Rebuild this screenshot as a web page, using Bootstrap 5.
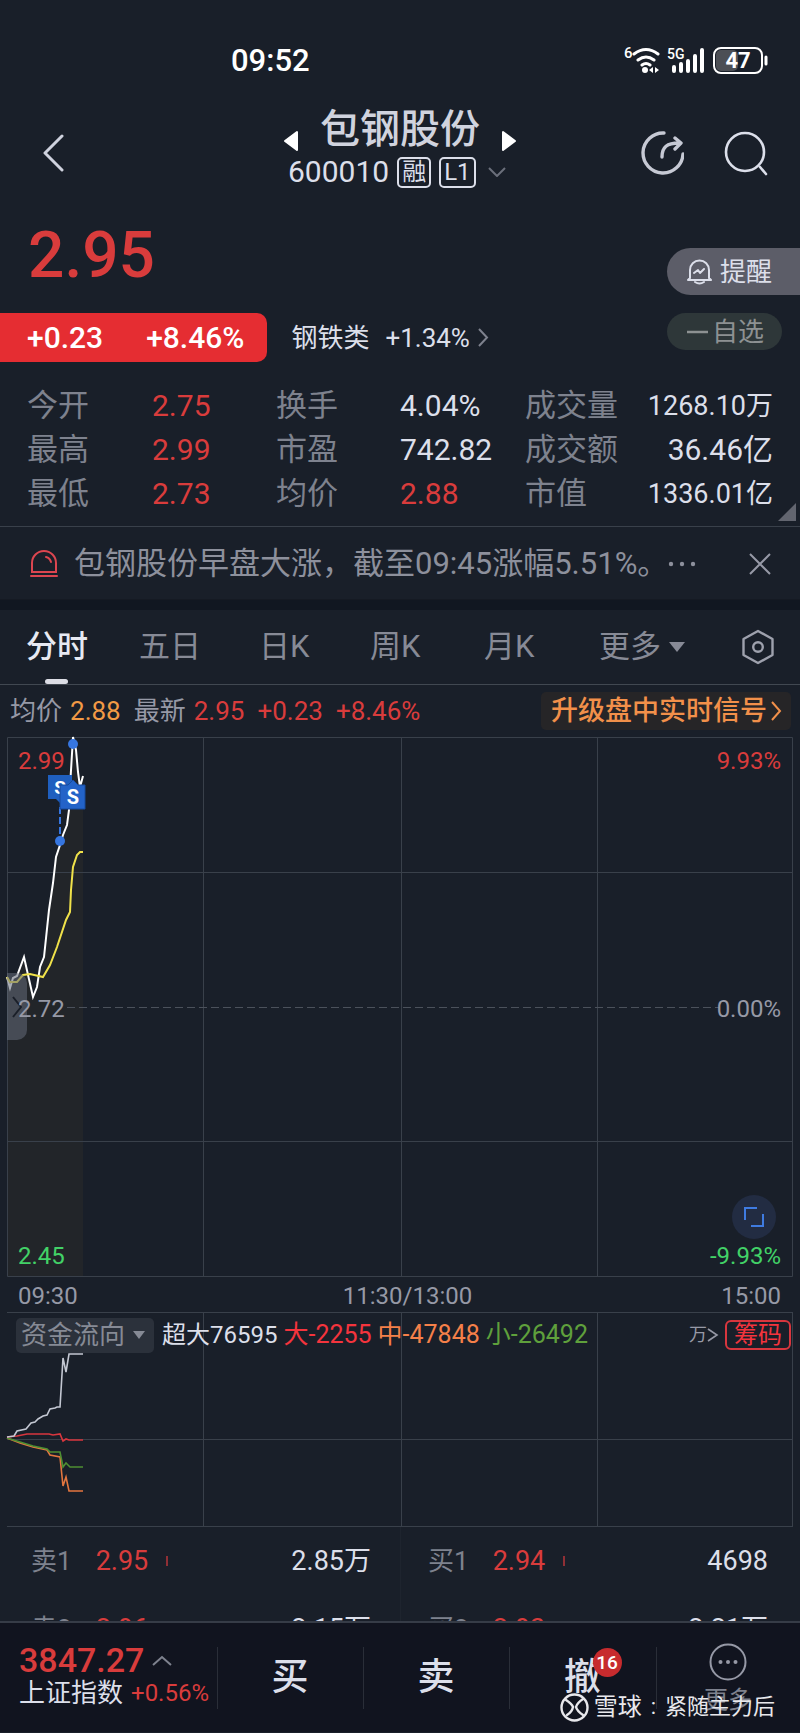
<!DOCTYPE html>
<html lang="zh-CN">
<head>
<meta charset="utf-8">
<meta name="viewport" content="width=device-width, initial-scale=1">
<title>包钢股份 600010</title>
<link href="https://cdn.jsdelivr.net/npm/bootstrap@5.3.0/dist/css/bootstrap.min.css" rel="stylesheet">
<style>
  :root { --ink:#dcdfea; --dim:#7e828e; --mute:#9699a6; --rise:#d93c3c; --fall:#42d267; --line:#39404a; --bg:#191f29; }
  body { background:var(--bg); color:var(--ink); font-family:Roboto,"Noto Sans CJK SC",sans-serif; font-size:26px; line-height:32px; overflow-x:hidden; }
  button { background:none; border:0; padding:0; color:inherit; font:inherit; line-height:inherit; }
  a { color:inherit; text-decoration:none; }
  svg { display:block; flex-shrink:0; }
  .rise { color:var(--rise); } .fall { color:var(--fall); } .dim { color:var(--dim); } .mute { color:var(--mute); }
  .avg { color:#f29a45; }
  .t24 { font-size:24px; } .t26 { font-size:26px; }

  .statusbar { height:85px; padding:37px 30px 0 231px; color:#fff; }
  .clock { font-size:31px; line-height:48px; font-weight:500; }
  .head { height:115px; padding:0 32px; }
  .side { flex:1 1 0; }
  .head .side { padding-top:20px; }
  .back { padding-left:11px; }
  .title-block { min-width:232px; padding-top:23px; }
  .stock-title { font-size:40px; line-height:44px; font-weight:500; color:#d0d3de; }
  .code { font-size:30px; }
  .tagbox { border:2px solid var(--ink); border-radius:5px; height:31px; line-height:27px; font-size:24px; padding:0 3px; }

  .price-row { height:113px; }
  .price { font-size:64px; line-height:72px; font-weight:500; padding:20px 0 0 28px; }
  .remind { background:#5c5d68; height:47px; border-radius:24px 0 0 24px; padding:0 28px 0 20px; margin-top:48px; }
  .delta { background:#e52d32; color:#fff; height:49px; border-radius:0 10px 10px 0; padding:0 23px 0 27px; gap:43px; font-size:30px; font-weight:500; }
  .fav { background:#2e3739; color:#8d9192; height:37px; border-radius:19px; padding:0 18px 0 20px; margin:0 18px 12px 0; }

  .stats { display:grid; grid-template-columns:125fr 124fr 124fr 125fr 122fr 126fr; padding:22px 27px 10px 27px; line-height:44px; font-size:30px; position:relative; }
  .stats dt, .stats dd { margin:0; font-weight:400; white-space:nowrap; }
  .stats dt { color:var(--dim); font-size:31px; }
  .stats .amount { text-align:right; font-size:27px; }
  .stats .amount.wide { font-size:30px; }
  .corner { position:absolute; right:4px; bottom:5px; width:18px; height:18px; background:#62656f; clip-path:polygon(100% 0,100% 100%,0 100%); }

  .news { height:74px; border-top:1px solid var(--line); border-bottom:1px solid #151a23; padding:2px 29px 0 30px; font-size:31px; color:#8d909c; white-space:nowrap; }
  .gapband { height:10px; background:#111721; }
  .tabs { display:grid; grid-template-columns:113fr 120fr 111fr 114fr 115fr 142fr 34px; justify-items:start; align-items:center; height:75px; border-bottom:1px solid #414851; padding:0 25px 0 26px; font-size:31px; color:#878a96; }
  .tabs button { height:74px; position:relative; }
  .tabs .on { color:#e7e9f2; font-weight:500; }
  .tabs .on::after { content:""; position:absolute; left:50%; bottom:0; width:23px; height:5px; margin-left:-12px; border-radius:3px; background:#dcdde5; }
  .tri { display:inline-block; border:8px solid transparent; border-top:10px solid currentColor; border-bottom:0; }
  .tri-sm { border-width:6px; border-top-width:8px; }

  .infobar { height:52px; padding:0 9px 0 10px; }
  .infobar .val { padding-right:13px; }
  .promo { background:#262527; color:#f2904a; border-radius:5px; height:38px; padding:0 9px 0 10px; font-weight:500; }
  .promo span { font-size:27px; }
  .chart { position:relative; margin:0 7px; color:var(--mute); font-size:24px; }
  .chart > svg { width:100%; overflow:visible; }
  .lbl { position:absolute; line-height:32px; }
  .lbl-l { left:11px; } .lbl-r { right:12px; }
  .lbl-top { top:8px; } .lbl-mid { top:256px; } .lbl-bot { bottom:5px; }
  .drawer { position:absolute; left:0; top:236px; width:20px; height:67px; border-radius:0 10px 10px 0; background:rgba(100,107,122,.55); color:#1a1f29; }
  .expand { position:absolute; right:17px; bottom:38px; width:44px; height:44px; border-radius:50%; background:#222c42; color:#3f7be0; }
  .times { height:35px; padding:2px 19px 0 18px; font-size:24px; color:var(--mute); }
  .flowhead { position:absolute; left:9px; right:2px; top:5px; height:36px; gap:6px; }
  .flowpick { background:#2b313b; border-radius:5px; height:35px; padding:0 9px 0 5px; font-size:26px; color:#868a95; margin-right:2px; }
  .flow-xl { color:#dcdfea; } .flow-l { color:#f4343d; } .flow-m { color:#f58049; } .flow-s { color:#5fa03c; }
  .flow-l, .flow-m, .flow-s { font-size:25px; }
  .unit { font-size:18px; }
  .chips { border:2px solid #d8363e; border-radius:6px; color:#f4343d; height:30px; line-height:26px; font-size:24px; padding:0 7px; }

  .book { height:94px; overflow:hidden; font-size:27px; }
  .book .half { width:50%; }
  .book .line { height:68px; }
  .book .who { margin-right:24px; } .book .at { margin-right:18px; }
  .book .half:first-child .line { padding:0 29px 0 31px; }
  .book .half:last-child .line { padding:0 32px 0 27px; }
  .book .half:last-child { border-left:1px solid #1e242e; }
  .bartick { width:2px; height:10px; background:#8f2f35; }

  .dock { border-top:2px solid #363c47; background:#11141f; min-height:111px; position:relative; display:grid; grid-template-columns:217fr 146fr 146fr 147fr 144fr; }
  .dock > a, .dock > button { min-height:109px; position:relative; }
  .dock > button::before { content:""; position:absolute; left:0; top:24px; height:62px; border-left:1px solid #2a2e38; }
  .index-box { padding:16px 0 0 19px; }
  .index-no { font-size:34px; line-height:34px; font-weight:500; }
  .act { font-size:37px; font-weight:500; }
  .cnt { position:absolute; left:50%; top:25px; margin-left:10px; width:29px; height:29px; border-radius:50%; background:#c72b2e; color:#fff; font-size:19px; line-height:29px; font-weight:500; }
  .more { padding-top:20px; gap:3px; }
  .credit { position:absolute; right:25px; bottom:9px; font-size:22px; color:#e8e8ec; gap:5px; }
</style>
</head>
<body>
<main class="container-fluid p-0">
  <header>
    <div class="statusbar d-flex justify-content-between align-items-start">
      <span class="clock">09:52</span>
      <svg class="mt-2" width="146" height="36" viewBox="0 0 146 36" fill="none" aria-label="Wi-Fi 5G 47%">
        <g transform="translate(0 -4)">
        <text x="0" y="17" font-size="15" font-weight="500" fill="#fff">6</text>
        <g stroke="#fff" stroke-width="3" stroke-linecap="round"><path d="M10 13q12-9 24 0M14 19q8-6 16 0M18 24q4-3 8 0"/></g>
        <circle cx="21" cy="29" r="3" fill="#fff"/><path d="M25 29l4-3v6zM35 29l-4-3v6z" fill="#fff"/>
        <text x="43" y="18" font-size="14" font-weight="500" fill="#fff">5G</text>
        <g stroke="#fff" stroke-width="4" stroke-linecap="round"><path d="M50 26v4M57 23v7M64 20v10M71 15v15M78 9v21"/></g>
        <rect x="90" y="7" width="48" height="25" rx="7" stroke="#fff" stroke-width="2"/><rect x="92" y="9" width="22" height="21" rx="5" fill="#4c4f55"/>
        <text x="114" y="27" font-size="22" font-weight="700" fill="#fff" text-anchor="middle">47</text>
        <path d="M142 16v7" stroke="#fff" stroke-width="3" stroke-linecap="round"/>
        </g>
      </svg>
    </div>
    <div class="head d-flex">
      <div class="side d-flex align-items-center">
        <button class="back" aria-label="返回"><svg width="22" height="38" viewBox="0 0 22 38" fill="none" stroke="#cfd2de" stroke-width="3" stroke-linecap="round" stroke-linejoin="round"><path d="M19 2L2 19l17 17"/></svg></button>
      </div>
      <div class="title-block">
        <div class="d-flex align-items-end justify-content-between">
          <button aria-label="上一只"><svg width="15" height="22" viewBox="0 0 15 22" fill="#fff" stroke="#fff" stroke-width="2" stroke-linejoin="round"><path d="M13 2v18L1 11z"/></svg></button>
          <h1 class="m-0 stock-title">包钢股份</h1>
          <button aria-label="下一只"><svg width="15" height="22" viewBox="0 0 15 22" fill="#fff" stroke="#fff" stroke-width="2" stroke-linejoin="round"><path d="M2 2v18l12-9z"/></svg></button>
        </div>
        <div class="d-flex align-items-center gap-2 px-1 pt-1">
          <span class="code">600010</span><span class="tagbox">融</span><span class="tagbox">L1</span>
          <svg class="ms-1" width="18" height="10" viewBox="0 0 18 10" fill="none" stroke="#6b6f7b" stroke-width="2"><path d="M1 1l8 8 8-8"/></svg>
        </div>
      </div>
      <div class="side d-flex align-items-center justify-content-end gap-4">
        <button class="pe-3" aria-label="分享"><svg width="44" height="46" viewBox="0 0 44 46" fill="none" stroke="#c6c9d4" stroke-width="3.4" stroke-linecap="round" stroke-linejoin="round"><path d="M24 3A20 20 0 1 0 43 24M22 27C22 17 27 13 39 13M35 8l6 5-6 6"/></svg></button>
        <button aria-label="搜索"><svg width="44" height="46" viewBox="0 0 44 46" fill="none" stroke="#dcdfea" stroke-width="2.6" stroke-linecap="round"><circle cx="21" cy="22" r="19"/><path d="M36 37l6 7"/></svg></button>
      </div>
    </div>
  </header>

  <section>
    <div class="price-row d-flex justify-content-between align-items-start">
      <div class="price rise">2.95</div>
      <button class="remind d-flex align-items-center gap-2"><svg width="25" height="26" viewBox="0 0 25 26" fill="none" stroke="#dcdfea" stroke-width="2" stroke-linecap="round" stroke-linejoin="round"><path d="M3 19V11a9.500 9.500 0 0 1 19 0v8l2 2H1zM8 23q4.500 3 9 0M7 14l4-3 2 3 4-4"/></svg><span>提醒</span></button>
    </div>
    <div class="d-flex align-items-center">
      <div class="delta d-flex align-items-center"><span>+0.23</span><span>+8.46%</span></div>
      <a href="#" class="d-flex align-items-center ps-4 t26"><span>钢铁类</span><span class="ps-3 pe-2">+1.34%</span><svg width="11" height="19" viewBox="0 0 11 19" fill="none" stroke="#7e828e" stroke-width="2"><path d="M1 1l8 8.500-8 8.500"/></svg></a>
      <button class="fav ms-auto d-flex align-items-center gap-1"><svg width="21" height="4" viewBox="0 0 21 4"><path d="M0 2h21" stroke="#8d9192" stroke-width="2.500"/></svg><span>自选</span></button>
    </div>
    <dl class="stats m-0">
      <dt>今开</dt><dd class="rise">2.75</dd><dt>换手</dt><dd>4.04%</dd><dt>成交量</dt><dd class="amount">1268.10万</dd>
      <dt>最高</dt><dd class="rise">2.99</dd><dt>市盈</dt><dd>742.82</dd><dt>成交额</dt><dd class="amount wide">36.46亿</dd>
      <dt>最低</dt><dd class="rise">2.73</dd><dt>均价</dt><dd class="rise">2.88</dd><dt>市值</dt><dd class="amount">1336.01亿</dd>
      <span class="corner"></span>
    </dl>
    <div class="news d-flex align-items-center">
      <svg class="me-3" width="28" height="28" viewBox="0 0 28 28" fill="none" stroke="#dc4650" stroke-width="2" stroke-linecap="round"><path d="M2 22V13a12 12 0 0 1 24 0v9zM1 26h26M16 7q4 1 5 5"/></svg>
      <a href="#">包钢股份早盘大涨，截至09:45涨幅5.51%。</a>
      <svg width="28" height="6" viewBox="0 0 28 6" fill="#8d909c"><circle cx="3" cy="3" r="2.200"/><circle cx="14" cy="3" r="2.200"/><circle cx="25" cy="3" r="2.200"/></svg>
      <button class="ms-auto" aria-label="关闭"><svg width="22" height="22" viewBox="0 0 22 22" fill="none" stroke="#9699a6" stroke-width="2"><path d="M1 1l20 20M21 1L1 21"/></svg></button>
    </div>
  </section>
  <div class="gapband"></div>

  <nav class="tabs">
    <button class="on">分时</button><button>五日</button><button>日K</button><button>周K</button><button>月K</button>
    <button class="d-flex align-items-center gap-2"><span>更多</span><span class="tri"></span></button>
    <button aria-label="设置"><svg width="34" height="36" viewBox="0 0 34 36" fill="none" stroke="#9ea1ad" stroke-width="2.400" stroke-linejoin="round"><path d="M17 2l14.500 8v16L17 34 2.500 26V10z"/><circle cx="17" cy="18" r="4.800"/></svg></button>
  </nav>

  <section>
    <div class="infobar d-flex align-items-center">
      <span class="mute pe-2">均价</span><span class="avg val">2.88</span>
      <span class="mute pe-2">最新</span><span class="rise val">2.95</span><span class="rise val">+0.23</span><span class="rise">+8.46%</span>
      <a href="#" class="promo ms-auto d-flex align-items-center gap-1"><span>升级盘中实时信号</span><svg width="11" height="20" viewBox="0 0 11 20" fill="none" stroke="currentColor" stroke-width="2"><path d="M1 1l8 9-8 9"/></svg></a>
    </div>
    <div class="chart">
      <svg height="540" viewBox="0 0 786 540" preserveAspectRatio="none" fill="none">
        <path d="M0 240L3 251 6 241 10 239 17 220 26 260 30 250 33 230 37 220 42 173 46 146 49 120 53 108 60 88 63 50 66 0 73 50 76 39V539H0z" fill="#222529"/>
        <path d="M0.500 0.500H785.500V539.500H0.500zM196.500 0V540M394.500 0V540M590.500 0V540M0 135.500H786M0 404.500H786" stroke="#39404a"/>
        <path d="M60 270.500H712" stroke="#4b515b" stroke-dasharray="8 4"/>
        <path d="M0 240L3 251 6 241 10 239 17 220 26 260 30 250 33 230 37 220 42 173 46 146 49 120 53 108 56 98 60 88 62 73 63 50 66 0 69 13 71 35 73 50 76 39" stroke="#fff" stroke-width="2"/>
        <path d="M0 240L3 245 10 245 16 238 23 237 36 240 43 228 50 210 59 183 63 175 64 153 66 130 70 118 73 115H76" stroke="#f0e24a" stroke-width="2"/>
        <path d="M53 70V104" stroke="#3676e0" stroke-width="2" stroke-dasharray="7 3"/>
        <circle cx="53" cy="104" r="5" fill="#3676e0"/><circle cx="66" cy="7" r="5" fill="#3676e0"/>
        <path d="M41 38H65V62H57L53 66 49 62H41z" fill="#1f5fbf"/>
        <text x="53" y="57" font-size="19" font-weight="700" fill="#fff" text-anchor="middle">S</text>
        <path d="M53 48H61L66 43 71 48H78V72H53z" fill="#2363c8" stroke="#174b9c"/>
        <text x="66" y="67" font-size="20" font-weight="700" fill="#fff" text-anchor="middle">S</text>
      </svg>
      <button class="drawer d-flex align-items-center justify-content-center" aria-label="展开"><svg width="10" height="22" viewBox="0 0 10 22" fill="none" stroke="currentColor" stroke-width="2"><path d="M1 1l8 10-8 10"/></svg></button>
      <span class="lbl lbl-l lbl-top rise">2.99</span><span class="lbl lbl-r lbl-top rise">9.93%</span>
      <span class="lbl lbl-l lbl-mid">2.72</span><span class="lbl lbl-r lbl-mid">0.00%</span>
      <span class="lbl lbl-l lbl-bot fall">2.45</span><span class="lbl lbl-r lbl-bot fall">-9.93%</span>
      <button class="expand d-flex align-items-center justify-content-center" aria-label="全屏"><svg width="22" height="22" viewBox="0 0 22 22" fill="none" stroke="currentColor" stroke-width="2"><path d="M2 14V2h12M20 8v12H8"/></svg></button>
    </div>
    <div class="times d-flex align-items-center justify-content-between"><span class="side">09:30</span><span class="ps-3">11:30/13:00</span><span class="side text-end">15:00</span></div>
    <div class="chart">
      <svg height="215" viewBox="0 0 786 215" preserveAspectRatio="none" fill="none">
        <path d="M0 0.500H786M0 214.500H786M0 127.500H786M196.500 0V215M394.500 0V215M590.500 0V215M785.500 0V215" stroke="#39404a"/>
        <g stroke-width="1.600">
          <path d="M0 126L13 131 26 135 40 138 43 143 53 145 56 174 59 165 62 179H76" stroke="#e3763f"/>
          <path d="M0 126L13 130 26 134 40 137 43 140H53L56 155 59 151 63 155H76" stroke="#4e8f32"/>
          <path d="M0 125L10 124 20 122H42L46 123 53 122 56 129 59 127 62 128H76" stroke="#d8363e"/>
          <path d="M0 125L7 124 10 119 19 117 24 111 28 110 31 107 36 104 40 103 43 97 48 96 50 95H53L56 46 59 60 62 42H76" stroke="#c3c7d2"/>
        </g>
      </svg>
      <div class="flowhead d-flex align-items-center">
        <button class="flowpick d-flex align-items-center gap-2"><span>资金流向</span><span class="tri tri-sm"></span></button>
        <span class="flow-xl">超大76595</span><span class="flow-l">大-2255</span><span class="flow-m">中-47848</span><span class="flow-s">小-26492</span>
        <a href="#" class="ms-auto d-flex align-items-center unit"><span>万</span><svg width="12" height="14" viewBox="0 0 12 14" fill="none" stroke="#9699a6" stroke-width="1.600"><path d="M1 1l9 6-9 6"/></svg></a>
        <button class="chips">筹码</button>
      </div>
    </div>
  </section>

  <section class="book d-flex">
    <div class="half">
      <div class="line d-flex align-items-center"><span class="who t26 dim">卖1</span><span class="at rise">2.95</span><i class="bartick"></i><span class="ms-auto">2.85万</span></div>
      <div class="line d-flex align-items-center"><span class="who t26 dim">卖2</span><span class="at rise">2.96</span><i class="bartick"></i><span class="ms-auto">2.15万</span></div>
    </div>
    <div class="half">
      <div class="line d-flex align-items-center"><span class="who t26 dim">买1</span><span class="at rise">2.94</span><i class="bartick"></i><span class="ms-auto">4698</span></div>
      <div class="line d-flex align-items-center"><span class="who t26 dim">买2</span><span class="at rise">2.93</span><i class="bartick"></i><span class="ms-auto">2.21万</span></div>
    </div>
  </section>

  <footer class="dock">
    <a href="#" class="index-box d-block text-nowrap">
      <span class="d-flex align-items-center gap-2 index-no rise pt-1">3847.27<svg width="20" height="11" viewBox="0 0 20 11" fill="none" stroke="#7e828e" stroke-width="2"><path d="M1 10l9-8 9 8"/></svg></span>
      <span class="d-flex align-items-center gap-2 t26"><span>上证指数</span><span class="rise t24">+0.56%</span></span>
    </a>
    <button class="act">买</button>
    <button class="act">卖</button>
    <button class="act">撤<span class="cnt">16</span></button>
    <button class="more d-flex flex-column align-items-center mute t24"><svg width="38" height="38" viewBox="0 0 38 38" fill="#9699a6"><circle cx="19" cy="19" r="17.500" fill="none" stroke="#9699a6" stroke-width="2"/><circle cx="11.500" cy="19" r="2"/><circle cx="19" cy="19" r="2"/><circle cx="26.500" cy="19" r="2"/></svg><span class="dim">更多</span></button>
    <div class="credit d-flex align-items-center"><svg width="29" height="29" viewBox="0 0 29 29" fill="none" stroke="#e8e8ec" stroke-width="2.400" stroke-linecap="round"><circle cx="14.500" cy="14.500" r="13"/><path d="M6 7q6 4 7 7-1 5-6 8M23 6q-6 4-7 8 1 4 7 8"/></svg><span class="t24">雪球</span><span class="px-1">:</span><span>紧随主力后</span></div>
  </footer>
</main>
<script src="https://cdn.jsdelivr.net/npm/bootstrap@5.3.0/dist/js/bootstrap.bundle.min.js"></script>
</body>
</html>
